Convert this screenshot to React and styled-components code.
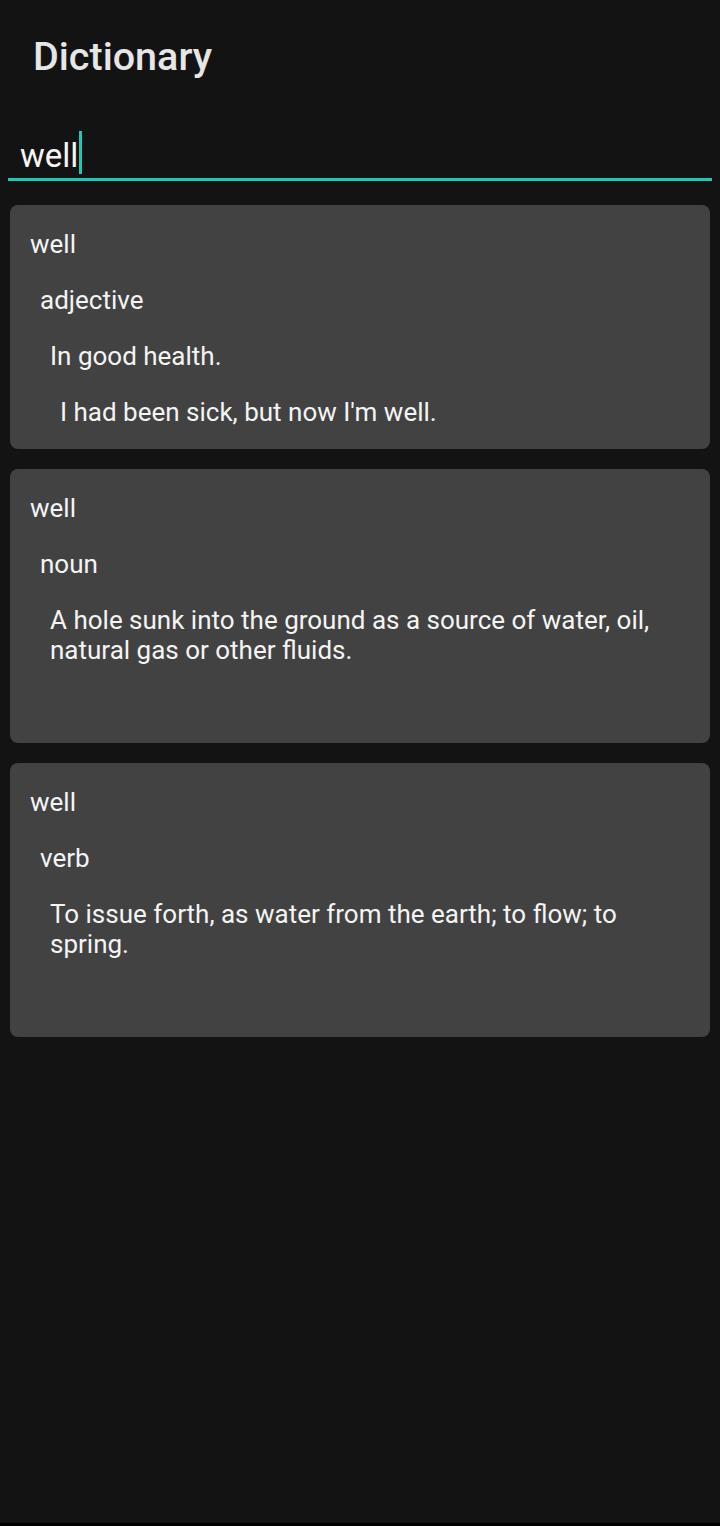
import React from "react";
import styled, { createGlobalStyle } from "styled-components";

const GlobalStyle = createGlobalStyle`
    html, body {
        margin: 0;
        padding: 0;
        background: #131313;
    }
    body {
        font-family: Roboto, "Noto Sans", sans-serif;
        color: #f2f2f2;
    }
`

const entries = [
    {
        word: "well",
        partOfSpeech: "adjective",
        definition: "In good health.",
        example: "I had been sick, but now I'm well.",
    },
    {
        word: "well",
        partOfSpeech: "noun",
        definition: "A hole sunk into the ground as a source of water, oil, natural gas or other fluids.",
        example: "",
    },
    {
        word: "well",
        partOfSpeech: "verb",
        definition: "To issue forth, as water from the earth; to flow; to spring.",
        example: "",
    },
];

function Entry({ word, partOfSpeech, definition, example }) {
    return (
        <Card>
            <Line $level={0}>{word}</Line>
            <Line $level={1}>{partOfSpeech}</Line>
            <Line $level={2}>{definition}</Line>
            <Line $level={3}>{example}</Line>
        </Card>
    )
}

export default function App() {
    return (
        <>
            <GlobalStyle />
            <Screen>
                <Title>Dictionary</Title>
                <SearchField>
                    <SearchText>well</SearchText>
                    <Cursor />
                </SearchField>
                <Results>
                    {entries.map((item, index) =>
                        <Entry key={index} {...item} />
                    )}
                </Results>
            </Screen>
        </>
    )
}

const Screen = styled.div`
    display: flex;
    flex-direction: column;
    width: 720px;
    height: 1523px;
    background: #131313;
    border-bottom: 3px solid #000;
`
const Title = styled.h1`
    margin: 0;
    padding: 34px 0 0 33px;
    height: 90px;
    box-sizing: border-box;
    font-size: 39.5px;
    font-weight: 500;
    line-height: 46px;
    color: #e6e6e6;
`
const SearchField = styled.div`
    display: flex;
    align-items: flex-end;
    margin: 41px 8px 0;
    padding-left: 12px;
    height: 47px;
    border-bottom: 3px solid #1ec9b4;
`
const SearchText = styled.span`
    font-size: 33px;
    line-height: 40px;
    color: #f5f5f5;
    padding-bottom: 2px;
`
const Cursor = styled.span`
    width: 3px;
    height: 43px;
    margin-left: 1px;
    margin-bottom: 4px;
    background: #1ec9b4;
`
const Results = styled.div`
    display: flex;
    flex-direction: column;
    gap: 20px;
    padding: 24px 10px 0;
`
const Card = styled.div`
    display: flex;
    flex-direction: column;
    gap: 26px;
    padding: 24px 20px 22px;
    background: #424242;
    border-radius: 8px;
`
const Line = styled.div`
    margin-left: ${props => props.$level * 10}px;
    min-height: 30px;
    font-size: 26px;
    line-height: 30px;
    color: #f4f4f4;
`
